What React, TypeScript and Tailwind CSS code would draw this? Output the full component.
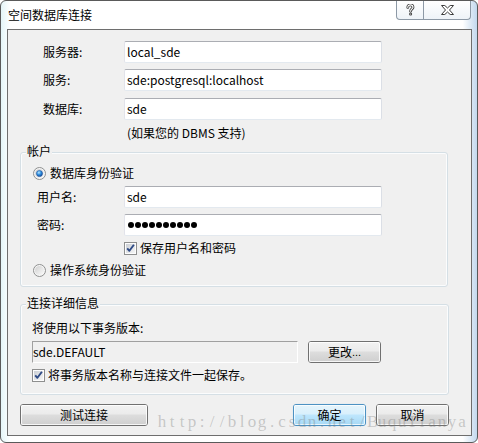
import React from "react";

const FONT = "font-['Noto_Sans_CJK_SC',sans-serif]";

function TextBox({ value, children }: { value?: string; children?: React.ReactNode }) {
  return (
    <div className="flex h-[22px] w-[258px] items-center rounded-[2px] border border-t-[#abadb3] border-l-[#e2e3ea] border-r-[#dbdfe6] border-b-[#e3e9ef] bg-white pl-[2px] text-[12px] leading-[16px] text-black">
      {value}
      {children}
    </div>
  );
}

function Radio({ checked }: { checked?: boolean }) {
  return (
    <svg width="13" height="13" viewBox="0 0 13 13" className="shrink-0">
      <defs>
        <linearGradient id="rbg" x1="0" y1="0" x2="1" y2="1">
          <stop offset="0" stopColor="#d0d0d0" />
          <stop offset="1" stopColor="#fbfbfb" />
        </linearGradient>
        <radialGradient id="rdot" cx="0.4" cy="0.35" r="0.75">
          <stop offset="0" stopColor="#b9e8ff" />
          <stop offset="0.45" stopColor="#2f8fe0" />
          <stop offset="1" stopColor="#0c3a86" />
        </radialGradient>
      </defs>
      <circle cx="6.5" cy="6.5" r="6" fill="#f6f6f6" stroke="#8e8f8f" />
      <circle cx="6.5" cy="6.5" r="4.6" fill="url(#rbg)" />
      {checked && <circle cx="6.5" cy="6.5" r="3.1" fill="url(#rdot)" stroke="#1b4f9a" strokeWidth="0.5" />}
    </svg>
  );
}

function Check() {
  return (
    <svg width="13" height="13" viewBox="0 0 13 13" className="shrink-0">
      <defs>
        <linearGradient id="cbg" x1="0" y1="0" x2="1" y2="1">
          <stop offset="0" stopColor="#cbcfd5" />
          <stop offset="1" stopColor="#f6f6f6" />
        </linearGradient>
      </defs>
      <rect x="0.5" y="0.5" width="12" height="12" fill="#fdfdfd" stroke="#8e8f8f" />
      <rect x="2" y="2" width="9" height="9" fill="url(#cbg)" />
      <path d="M3.2 6.3 L5.4 8.8 L9.9 2.8" fill="none" stroke="#2f4b86" strokeWidth="1.9" strokeLinejoin="round" />
    </svg>
  );
}

function Btn({ children, def, wide }: { children: React.ReactNode; def?: boolean; wide?: boolean }) {
  return (
    <div
      className={
        (wide ? "w-[128px] " : "w-[73px] ") +
        (def ? "border-[#3c7fb1] " : "border-[#707070] ") +
        "h-[22px] shrink-0 rounded-[3px] border"
      }
    >
      <div
        className={
          (def
            ? "bg-[linear-gradient(#e5f4fc,#d9f0fc_45%,#bee6fd_50%,#a7d9f5)] shadow-[inset_0_0_0_1px_rgba(255,255,255,0.75),0_0_2px_#7fc8f5] "
            : "bg-[linear-gradient(#f2f2f2,#ebebeb_45%,#dddddd_50%,#cfcfcf)] shadow-[inset_0_0_0_1px_rgba(255,255,255,0.8)] ") +
          "flex h-full w-full items-center justify-center rounded-[2px] text-[12px] leading-[16px] text-black"
        }
      >
        {children}
      </div>
    </div>
  );
}

function QIcon() {
  return (
    <svg width="9" height="12" viewBox="0 0 9 12">
      <path d="M1.8 3.4 C1.8 1.7 3 0.9 4.4 0.9 C6 0.9 7 1.9 7 3.2 C7 4.8 4.6 5.1 4.6 7.2" fill="none" stroke="#3a3a3a" strokeWidth="2.8" strokeLinecap="round" />
      <path d="M1.8 3.4 C1.8 1.7 3 0.9 4.4 0.9 C6 0.9 7 1.9 7 3.2 C7 4.8 4.6 5.1 4.6 7.2" fill="none" stroke="#ffffff" strokeWidth="1.1" strokeLinecap="round" />
      <circle cx="4.6" cy="10" r="1.5" fill="#3a3a3a" />
      <circle cx="4.6" cy="10" r="0.6" fill="#ffffff" />
    </svg>
  );
}

function XIcon() {
  return (
    <svg width="13" height="10" viewBox="0 0 13 10">
      <path
        d="M0.5 0.5 H3.8 L6.5 3 L9.2 0.5 H12.5 L8.5 5 L12.5 9.5 H9.2 L6.5 7 L3.8 9.5 H0.5 L4.5 5 Z"
        fill="#ffffff"
        stroke="#3a3a3a"
        strokeWidth="1"
        strokeLinejoin="round"
      />
    </svg>
  );
}

const WATERMARK = "http://blog.csdn.net/BuquTianya";

export default function App() {
  return (
    <div className={"relative h-[443px] w-[478px] bg-white text-black " + FONT}>
      <div className="flex h-[443px] w-[478px] flex-col rounded-[6px] border border-[#5a5a5a] bg-[linear-gradient(to_right,#e4f5f8,#ffffff_2%,#ffffff_97%,#c2d8ee)]">
        {/* Title bar */}
        <div className="flex h-[28px] items-start">
          <div className="pl-[7px] pt-[6px] text-[12px] leading-[16px]">空间数据库连接</div>
          <div className="ml-auto mr-[6px] flex h-[19px] rounded-b-[4px] border-x border-b border-[#8d99a6] bg-[linear-gradient(#ffffff,#eef3f8)]">
            <div className="flex w-[26px] items-center justify-center pb-[1px]">
              <QIcon />
            </div>
            <div className="flex w-[47px] items-center justify-center border-l border-[#8d99a6] pb-[1px]">
              <XIcon />
            </div>
          </div>
        </div>

        {/* Client area */}
        <div className="ml-[6px] flex h-[407px] w-[465px] flex-col border border-[#6e6e6e] bg-[#f0f0f0] text-[12px] leading-[16px]">
          <div className="mt-[11px] flex flex-col">
            <div className="flex h-[22px] items-center pl-[35px]">
              <span className="w-[81px]">服务器:</span>
              <TextBox value="local_sde" />
            </div>
            <div className="mt-[6px] flex h-[22px] items-center pl-[35px]">
              <span className="w-[81px]">服务:</span>
              <TextBox value="sde:postgresql:localhost" />
            </div>
            <div className="mt-[7px] flex h-[22px] items-center pl-[35px]">
              <span className="w-[81px]">数据库:</span>
              <TextBox value="sde" />
            </div>
            <div className="mt-[5px] h-[16px] pl-[119px]">(如果您的 DBMS 支持)</div>
          </div>

          {/* Account group */}
          <div className="relative ml-[12px] mt-[11px] flex h-[135px] w-[428px] flex-col rounded-[3px] border border-[#d5dfe5] pt-[12px] shadow-[inset_0_0_0_1px_#fbfcfd]">
            <span className="absolute left-[5px] top-[-10px] bg-[#f0f0f0] px-[1px]">帐户</span>
            <div className="flex h-[16px] items-center gap-[4px] pl-[12px]">
              <Radio checked />
              <span>数据库身份验证</span>
            </div>
            <div className="mt-[5px] flex h-[22px] items-center">
              <span className="w-[103px] pl-[16px]">用户名:</span>
              <TextBox value="sde" />
            </div>
            <div className="mt-[6px] flex h-[22px] items-center">
              <span className="w-[103px] pl-[16px]">密码:</span>
              <TextBox>
                <div className="flex gap-[1px] pl-[1px]">
                  {Array.from({ length: 10 }).map((_, i) => (
                    <span key={i} className="h-[6px] w-[6px] rounded-full bg-black" />
                  ))}
                </div>
              </TextBox>
            </div>
            <div className="mt-[4px] flex h-[16px] items-center gap-[3px] pl-[103px]">
              <Check />
              <span>保存用户名和密码</span>
            </div>
            <div className="mt-[6px] flex h-[16px] items-center gap-[4px] pl-[12px]">
              <Radio />
              <span>操作系统身份验证</span>
            </div>
          </div>

          {/* Connection details group */}
          <div className="relative ml-[12px] mt-[17px] flex h-[91px] w-[429px] flex-col rounded-[3px] border border-[#d5dfe5] pt-[15px] shadow-[inset_0_0_0_1px_#fbfcfd]">
            <span className="absolute left-[5px] top-[-10px] bg-[#f0f0f0] px-[1px]">连接详细信息</span>
            <div className="h-[16px] pl-[11px]">将使用以下事务版本:</div>
            <div className="mt-[5px] flex h-[22px] items-center">
              <div className="ml-[11px] flex h-[22px] w-[266px] items-center border border-t-[#a0a0a0] border-l-[#a0a0a0] border-r-[#ffffff] border-b-[#ffffff] pl-0">
                sde.DEFAULT
              </div>
              <div className="ml-[10px]">
                <Btn>
                  <span>更改</span>
                  <span className="font-['Liberation_Sans',sans-serif] text-[11px]">...</span>
                </Btn>
              </div>
            </div>
            <div className="mt-[4px] flex h-[16px] items-center gap-[3px] pl-[11px]">
              <Check />
              <span>将事务版本名称与连接文件一起保存。</span>
            </div>
          </div>

          {/* Bottom buttons */}
          <div className="mt-[9px] flex h-[22px] pl-[12px]">
            <Btn wide>测试连接</Btn>
            <div className="ml-[145px]">
              <Btn def>确定</Btn>
            </div>
            <div className="ml-[10px]">
              <Btn>取消</Btn>
            </div>
          </div>
        </div>
      </div>

      {/* Watermark overlay */}
      <div className="pointer-events-none absolute left-[157px] top-[412px] flex font-['Liberation_Serif',serif] text-[17px] leading-[20px] text-[rgba(120,120,120,0.36)]">
        {WATERMARK.split("").map((c, i) => (
          <span key={i} className="w-[10px] text-center">
            {c}
          </span>
        ))}
      </div>
    </div>
  );
}
